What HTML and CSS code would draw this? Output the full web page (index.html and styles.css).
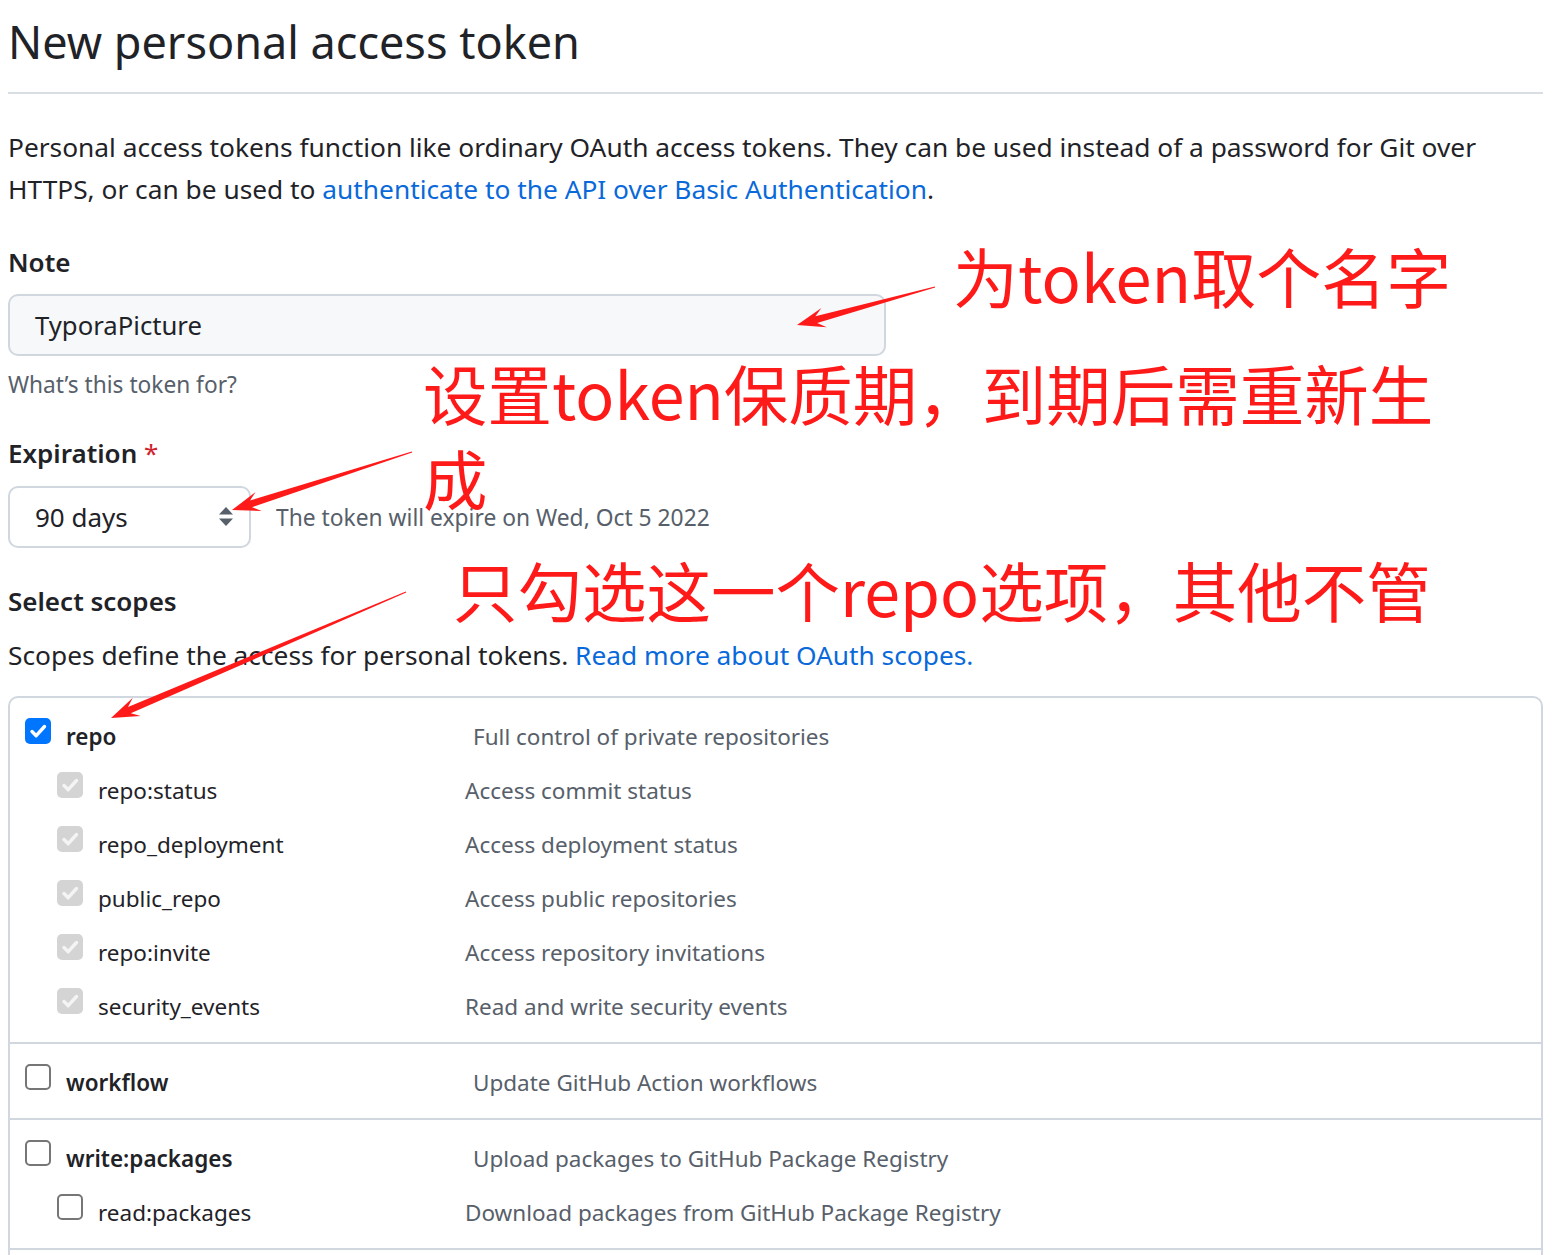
FILE: index.html
```html
<!DOCTYPE html>
<html lang="en">
<head>
<meta charset="utf-8">
<title>New personal access token</title>
<link rel="stylesheet" href="styles.css">
</head>
<body>
<div class="page">
  <div class="subhead">
    <h1 class="subhead-heading">New personal access token</h1>
  </div>

  <p class="intro">Personal access tokens function like ordinary OAuth access tokens. They can be used instead of a password for Git over HTTPS, or can be used to <a class="link">authenticate to the API over Basic Authentication</a>.</p>

  <div class="label note-label">Note</div>
  <div class="input">TyporaPicture</div>
  <div class="hint">What’s this token for?</div>

  <div class="label exp-label">Expiration <span class="req">*</span></div>
  <div class="exp-row">
    <div class="select">
      <span>90 days</span>
      <svg class="select-icon" width="16" height="22" viewBox="0 0 16 22"><path d="M8 1 L15 8.5 H1 Z" fill="#57606a"/><path d="M1 12.5 H15 L8 20 Z" fill="#57606a"/></svg>
    </div>
    <span class="exp-note">The token will expire on Wed, Oct 5 2022</span>
  </div>

  <div class="label scopes-label">Select scopes</div>
  <p class="scopes-desc">Scopes define the access for personal tokens. <a class="link">Read more about OAuth scopes.</a></p>

  <div class="scope-box">
    <ul class="scope-group">
      <li class="scope-row top">
        <span class="cb checked"><svg width="26" height="26" viewBox="0 0 26 26"><path d="M7 13.5 L11.2 17.7 L19.5 8.5" fill="none" stroke="#fff" stroke-width="3.4" stroke-linecap="round" stroke-linejoin="round"/></svg></span>
        <span class="scope-name strong">repo</span>
        <span class="scope-desc">Full control of private repositories</span>
      </li>
      <li class="scope-row sub">
        <span class="cb disabled"><svg width="26" height="26" viewBox="0 0 26 26"><path d="M7 13.5 L11.2 17.7 L19.5 8.5" fill="none" stroke="#f4f4f4" stroke-width="3.4" stroke-linecap="round" stroke-linejoin="round"/></svg></span>
        <span class="scope-name">repo:status</span>
        <span class="scope-desc">Access commit status</span>
      </li>
      <li class="scope-row sub">
        <span class="cb disabled"><svg width="26" height="26" viewBox="0 0 26 26"><path d="M7 13.5 L11.2 17.7 L19.5 8.5" fill="none" stroke="#f4f4f4" stroke-width="3.4" stroke-linecap="round" stroke-linejoin="round"/></svg></span>
        <span class="scope-name">repo_deployment</span>
        <span class="scope-desc">Access deployment status</span>
      </li>
      <li class="scope-row sub">
        <span class="cb disabled"><svg width="26" height="26" viewBox="0 0 26 26"><path d="M7 13.5 L11.2 17.7 L19.5 8.5" fill="none" stroke="#f4f4f4" stroke-width="3.4" stroke-linecap="round" stroke-linejoin="round"/></svg></span>
        <span class="scope-name">public_repo</span>
        <span class="scope-desc">Access public repositories</span>
      </li>
      <li class="scope-row sub">
        <span class="cb disabled"><svg width="26" height="26" viewBox="0 0 26 26"><path d="M7 13.5 L11.2 17.7 L19.5 8.5" fill="none" stroke="#f4f4f4" stroke-width="3.4" stroke-linecap="round" stroke-linejoin="round"/></svg></span>
        <span class="scope-name">repo:invite</span>
        <span class="scope-desc">Access repository invitations</span>
      </li>
      <li class="scope-row sub">
        <span class="cb disabled"><svg width="26" height="26" viewBox="0 0 26 26"><path d="M7 13.5 L11.2 17.7 L19.5 8.5" fill="none" stroke="#f4f4f4" stroke-width="3.4" stroke-linecap="round" stroke-linejoin="round"/></svg></span>
        <span class="scope-name">security_events</span>
        <span class="scope-desc">Read and write security events</span>
      </li>
    </ul>
    <ul class="scope-group">
      <li class="scope-row top">
        <span class="cb"></span>
        <span class="scope-name strong">workflow</span>
        <span class="scope-desc">Update GitHub Action workflows</span>
      </li>
    </ul>
    <ul class="scope-group">
      <li class="scope-row top">
        <span class="cb"></span>
        <span class="scope-name strong">write:packages</span>
        <span class="scope-desc">Upload packages to GitHub Package Registry</span>
      </li>
      <li class="scope-row sub">
        <span class="cb"></span>
        <span class="scope-name">read:packages</span>
        <span class="scope-desc">Download packages from GitHub Package Registry</span>
      </li>
    </ul>
    <ul class="scope-group">
      <li class="scope-row top">
        <span class="cb"></span>
        <span class="scope-name strong">delete:packages</span>
        <span class="scope-desc">Delete packages from GitHub Package Registry</span>
      </li>
    </ul>
  </div>

  <div class="ann ann-1">为token取个名字</div>
  <div class="ann ann-2">设置token保质期，到期后需重新生<br>成</div>
  <div class="ann ann-3">只勾选这一个repo选项，其他不管</div>

  <svg class="arrows" width="1552" height="1255" viewBox="0 0 1552 1255">
    <polygon fill="#ff1a1a" points="934.9,286.5 815.4,316.3 821.4,307.9 797,325 826.7,327.2 817.2,323.1 935.1,287.5"/>
    <polygon fill="#ff1a1a" points="411.8,451.5 250,500.5 255.6,491.9 232,510 261.7,510.9 252.1,507.2 412.2,452.5"/>
    <polygon fill="#ff1a1a" points="405.8,591.5 128,706.9 132.8,697.8 111,718 140.7,716.1 130.8,713.3 406.2,592.5"/>
  </svg>
</div>
</body>
</html>
```

FILE: styles.css
```css
* {
  box-sizing: border-box;
}

html,
body {
  margin: 0;
  padding: 0;
  background: #ffffff;
}

body {
  font-family: "Noto Sans", "Open Sans", "Liberation Sans", sans-serif;
  color: #1f2328;
  font-size: 26.3px;
}

.page {
  position: relative;
  width: 1552px;
  padding: 0 9px 0 8px;
}

.subhead {
  height: 94px;
  padding-top: 12px;
  border-bottom: 2px solid #d8dee4;
}

.subhead-heading {
  margin: 0;
  font-size: 45px;
  font-weight: 400;
  line-height: 60px;
  color: #1f2328;
}

.intro {
  margin: 32px 0 0;
  line-height: 42px;
}

.link {
  color: #0969da;
  text-decoration: none;
}

.label {
  font-size: 26px;
  font-weight: 600;
  line-height: 36px;
}

.note-label {
  margin-top: 34px;
}

.input {
  margin-top: 14px;
  width: 878px;
  height: 62px;
  display: flex;
  align-items: center;
  padding-left: 25px;
  font-size: 25.7px;
  background: #f6f8fa;
  border: 2px solid #d0d7de;
  border-radius: 10px;
}

.hint {
  margin-top: 14px;
  line-height: 30px;
  font-size: 22.7px;
  color: #57606a;
}

.exp-label {
  margin-top: 35px;
}

.req {
  color: #cf222e;
  font-weight: 400;
}

.exp-row {
  margin-top: 15px;
  display: flex;
  align-items: center;
  gap: 25px;
}

.select {
  width: 243px;
  height: 62px;
  display: flex;
  align-items: center;
  justify-content: space-between;
  padding: 0 15px 0 25px;
  font-size: 26px;
  background: #ffffff;
  border: 2px solid #d0d7de;
  border-radius: 10px;
}

.select-icon {
  display: block;
}

.exp-note {
  font-size: 22.8px;
  color: #57606a;
}

.scopes-label {
  margin-top: 35px;
}

.scopes-desc {
  margin: 15px 0 0;
  line-height: 42px;
}

.scope-box {
  margin-top: 20px;
  border: 2px solid #d0d7de;
  border-radius: 10px;
  font-size: 22.5px;
}

.scope-group {
  list-style: none;
  margin: 0;
  padding: 11px 0 9px;
}

.scope-group + .scope-group {
  border-top: 2px solid #d0d7de;
}

.scope-row {
  display: flex;
  align-items: center;
  height: 54px;
}

.scope-row.top {
  padding-left: 15px;
}

.scope-row.sub {
  padding-left: 47px;
}

.cb {
  flex: none;
  width: 26px;
  height: 26px;
  margin-bottom: 10px;
  border: 2px solid #767676;
  border-radius: 5px;
  background: #ffffff;
  display: flex;
  align-items: center;
  justify-content: center;
}

.cb svg {
  display: block;
  flex: none;
}

.cb.checked {
  border: none;
  background: #0075ff;
}

.cb.disabled {
  border: none;
  background: #d4d4d4;
}

.scope-name {
  margin-left: 15px;
}

.top .scope-name {
  width: 407px;
}

.sub .scope-name {
  width: 367px;
}

.scope-name.strong {
  font-weight: 600;
}

.scope-desc {
  color: #57606a;
}

.ann {
  position: absolute;
  font-family: "Noto Sans CJK SC", "Noto Sans", sans-serif;
  font-size: 64.5px;
  line-height: 64px;
  color: #ff1a1a;
  white-space: nowrap;
}

.ann-1 {
  left: 953px;
  top: 243px;
  font-size: 65px;
}

.ann-2 {
  left: 423px;
  top: 350px;
  line-height: 85px;
}

.ann-3 {
  left: 453px;
  top: 557px;
}

.arrows {
  position: absolute;
  left: 0;
  top: 0;
  pointer-events: none;
}
```
